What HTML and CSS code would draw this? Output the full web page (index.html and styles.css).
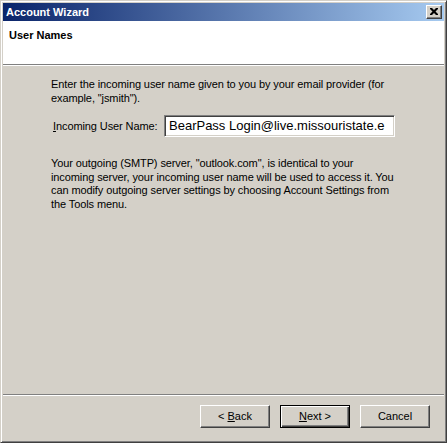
FILE: index.html
```html
<!DOCTYPE html>
<html>
<head>
<meta charset="utf-8">
<link rel="stylesheet" href="styles.css">
</head>
<body>
<div class="window">
  <div class="titlebar">
    <span class="title">Account Wizard</span>
    <span class="close-btn">
      <svg width="8" height="7" viewBox="0 0 8 7"><path d="M0 0h2l2 2 2-2h2v1l-2.5 2.5L8 6v1H6L4 5 2 7H0V6l2.5-2.5L0 1z" fill="#000"/></svg>
    </span>
  </div>
  <div class="client">
    <div class="header"><h1 class="header-title">User Names</h1></div>
    <div class="content">
      <p class="text">Enter the incoming user name given to you by your email provider (for<br>example, "jsmith").</p>
      <div class="field">
        <span class="label"><u>I</u>ncoming User Name:</span>
        <div class="input">BearPass Login@live.missouristate.e</div>
      </div>
      <p class="text text2">Your outgoing (SMTP) server, "outlook.com", is identical to your<br>incoming server, your incoming user name will be used to access it. You<br>can modify outgoing server settings by choosing Account Settings from<br>the Tools menu.</p>
    </div>
    <div class="footer">
      <span class="btn"><span>&lt; <u>B</u>ack</span></span>
      <span class="btn default"><span><u>N</u>ext &gt;</span></span>
      <span class="btn"><span>Cancel</span></span>
    </div>
  </div>
</div>
</body>
</html>
```
FILE: styles.css
```css
* { box-sizing: border-box; }
html, body { margin: 0; padding: 0; background: #d4d0c8; }
body { font-family: "Liberation Sans", Arial, sans-serif; font-size: 11px; color: #000; }
.window {
  width: 447px; height: 443px;
  background: #d4d0c8;
  border-top: 1px solid #d4d0c8; border-left: 1px solid #d4d0c8;
  border-right: 1px solid #404040; border-bottom: 1px solid #404040;
  box-shadow: inset 1px 1px #ffffff, inset -1px -1px #808080;
  padding: 2px;
  display: flex; flex-direction: column;
}
.titlebar {
  height: 18px; flex: none;
  background: linear-gradient(to right, #0a246a, #a6caf0);
  display: flex; align-items: center; justify-content: space-between;
  padding: 0 2px 0 3px;
}
.title { color: #fff; font-weight: bold; font-size: 11px; line-height: 13px; }
.close-btn {
  width: 16px; height: 14px;
  background: #d4d0c8;
  border-top: 1px solid #fff; border-left: 1px solid #fff;
  border-right: 1px solid #404040; border-bottom: 1px solid #404040;
  box-shadow: inset -1px -1px #808080;
  display: flex; align-items: center; justify-content: center;
  padding: 0 1px 1px 0;
}
.close-btn svg { display: block; }
.client { flex: 1; display: flex; flex-direction: column; }
.header {
  height: 44px; flex: none;
  background: #fff;
  border-bottom: 1px solid #808080;
  box-shadow: 0 1px #fff;
  padding: 8px 0 0 6px;
}
.header-title { margin: 0; font-size: 11px; font-weight: bold; line-height: 13px; }
.content { height: 328px; flex: none; margin-top: 1px; padding: 11px 0 0 48px; }
.text { margin: 0; line-height: 14px; white-space: nowrap; letter-spacing: -0.1px; }
.field { display: flex; align-items: center; margin-top: 10px; padding-left: 2px; letter-spacing: -0.1px; }
.label { width: 111px; }
.input {
  width: 231px; height: 22px;
  background: #fff;
  border-top: 1px solid #808080; border-left: 1px solid #808080;
  border-right: 1px solid #fff; border-bottom: 1px solid #fff;
  box-shadow: inset 1px 1px #404040, inset -1px -1px #d4d0c8;
  font-size: 13px; line-height: 20px; padding-left: 4px;
  letter-spacing: 0;
  white-space: nowrap; overflow: hidden;
}
.text2 { margin-top: 20px; line-height: 13.5px; }
.footer {
  flex: 1;
  border-top: 1px solid #808080;
  box-shadow: inset 0 1px #fff;
  display: flex; justify-content: flex-end; gap: 10px;
  padding: 10px 14px 0 0;
}
.btn {
  width: 70px; height: 23px;
  display: flex; align-items: center; justify-content: center;
  background: #d4d0c8;
  border-top: 1px solid #fff; border-left: 1px solid #fff;
  border-right: 1px solid #404040; border-bottom: 1px solid #404040;
  box-shadow: inset -1px -1px #808080;
  padding-bottom: 1px;
}
.btn.default {
  border: 1px solid #000;
  box-shadow: inset 1px 1px #fff, inset -1px -1px #404040, inset -2px -2px #808080;
}
u { text-decoration: underline; text-underline-offset: 1px; }
```
